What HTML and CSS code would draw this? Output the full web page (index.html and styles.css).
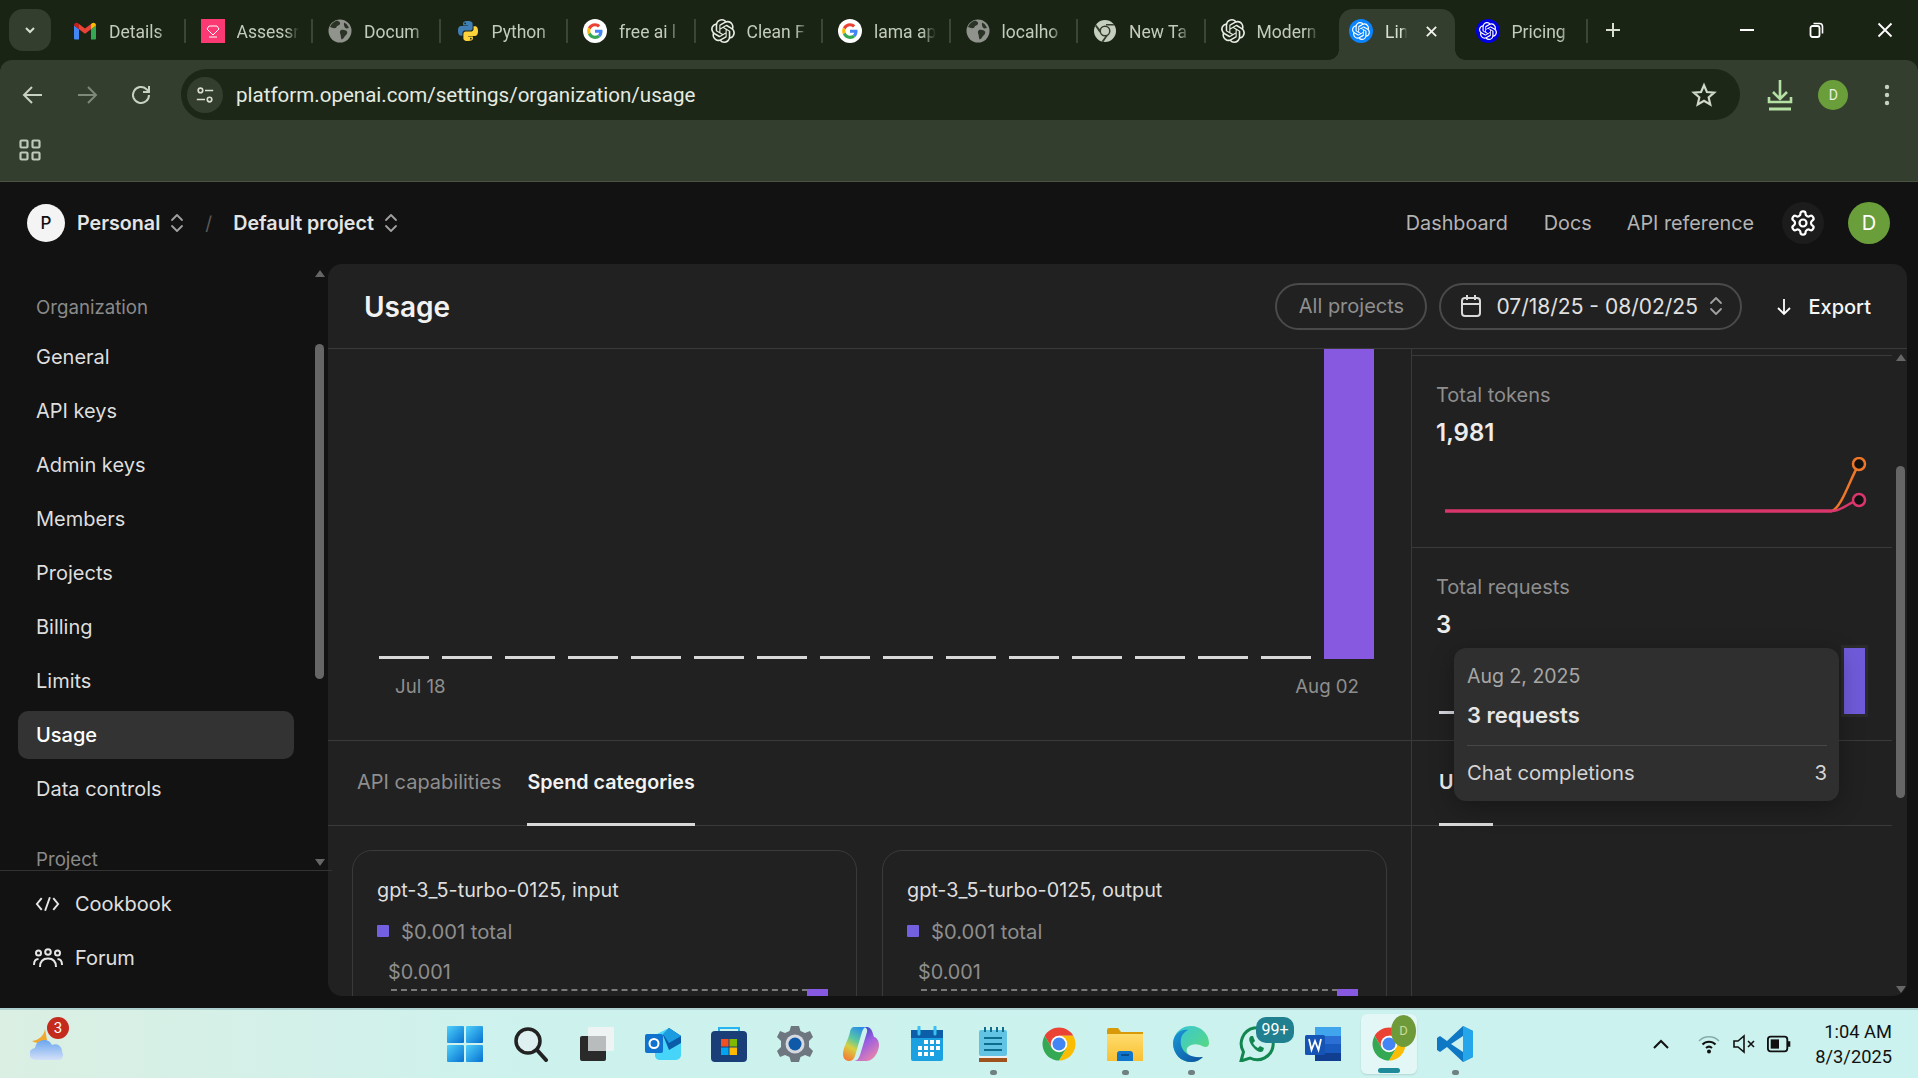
FILE: index.html
```html
<!DOCTYPE html>
<html lang="en">
<head>
<meta charset="utf-8">
<title>Usage</title>
<link rel="stylesheet" href="styles.css">
</head>
<body>
<svg class="sprite" aria-hidden="true">
  <defs>
    <linearGradient id="gWin" x1="0" y1="0" x2="1" y2="1"><stop offset="0" stop-color="#4fd0fb"/><stop offset="1" stop-color="#0670d0"/></linearGradient>
    <linearGradient id="gCop" x1="0.7" y1="0" x2="0.3" y2="1"><stop offset="0" stop-color="#2a8ee8"/><stop offset=".4" stop-color="#5cc8a0"/><stop offset=".65" stop-color="#d8d040"/><stop offset="1" stop-color="#f08038"/></linearGradient>
    <linearGradient id="gCop2" x1="0.2" y1="0" x2="0.8" y2="1"><stop offset="0" stop-color="#1a3fc0"/><stop offset=".45" stop-color="#9a5ee0"/><stop offset="1" stop-color="#f088a8"/></linearGradient>
    <linearGradient id="gEdge" x1="0" y1="0" x2="1" y2="1"><stop offset="0" stop-color="#38c6e0"/><stop offset="1" stop-color="#5fdc6a"/></linearGradient>
    <linearGradient id="gEdge2" x1="0" y1="0" x2="1" y2="1"><stop offset="0" stop-color="#1a9ad8"/><stop offset="1" stop-color="#0c4f9e"/></linearGradient>
    <linearGradient id="gFold" x1="0" y1="0" x2="0" y2="1"><stop offset="0" stop-color="#ffdc6c"/><stop offset="1" stop-color="#f8c034"/></linearGradient>
    <linearGradient id="gCloud" x1="0" y1="0" x2="0" y2="1"><stop offset="0" stop-color="#6aa6ee"/><stop offset="1" stop-color="#d4e0f8"/></linearGradient>
    <symbol id="i-openai" viewBox="0 0 24 24"><path fill="currentColor" d="M22.2819 9.8211a5.9847 5.9847 0 0 0-.5157-4.9108 6.0462 6.0462 0 0 0-6.5098-2.9A6.0651 6.0651 0 0 0 4.9807 4.1818a5.9847 5.9847 0 0 0-3.9977 2.9 6.0462 6.0462 0 0 0 .7427 7.0966 5.98 5.98 0 0 0 .511 4.9107 6.051 6.051 0 0 0 6.5146 2.9001A5.9847 5.9847 0 0 0 13.2599 24a6.0557 6.0557 0 0 0 5.7718-4.2058 5.9894 5.9894 0 0 0 3.9977-2.9001 6.0557 6.0557 0 0 0-.7475-7.0729zm-9.022 12.6081a4.4755 4.4755 0 0 1-2.8764-1.0408l.1419-.0804 4.7783-2.7582a.7948.7948 0 0 0 .3927-.6813v-6.7369l2.02 1.1686a.071.071 0 0 1 .038.052v5.5826a4.504 4.504 0 0 1-4.4945 4.4944zm-9.6607-4.1254a4.4708 4.4708 0 0 1-.5346-3.0137l.142.0852 4.783 2.7582a.7712.7712 0 0 0 .7806 0l5.8428-3.3685v2.3324a.0804.0804 0 0 1-.0332.0615L9.74 19.9502a4.4992 4.4992 0 0 1-6.1408-1.6464zM2.3408 7.8956a4.485 4.485 0 0 1 2.3655-1.9728V11.6a.7664.7664 0 0 0 .3879.6765l5.8144 3.3543-2.0201 1.1685a.0757.0757 0 0 1-.071 0l-4.8303-2.7865A4.504 4.504 0 0 1 2.3408 7.872zm16.5963 3.8558L13.1038 8.364 15.1192 7.2a.0757.0757 0 0 1 .071 0l4.8303 2.7913a4.4944 4.4944 0 0 1-.6765 8.1042v-5.6772a.79.79 0 0 0-.407-.667zm2.0107-3.0231l-.142-.0852-4.7735-2.7818a.7759.7759 0 0 0-.7854 0L9.409 9.2297V6.8974a.0662.0662 0 0 1 .0284-.0615l4.8303-2.7866a4.4992 4.4992 0 0 1 6.6802 4.66zM8.3065 12.863l-2.02-1.1638a.0804.0804 0 0 1-.038-.0567V6.0742a4.4992 4.4992 0 0 1 7.3757-3.4537l-.142.0805L8.704 5.459a.7948.7948 0 0 0-.3927.6813zm1.0976-2.3654l2.602-1.4998 2.6069 1.4998v2.9994l-2.5974 1.4997-2.6067-1.4997Z"/></symbol>
    <symbol id="i-gmail" viewBox="0 0 24 24"><path fill="#4285F4" d="M1 19.5V6.5l5 3.8v10.2H2a1 1 0 0 1-1-1z"/><path fill="#34A853" d="M18 20.5V10.3l5-3.8v13a1 1 0 0 1-1 1z"/><path fill="#EA4335" d="M6 10.3V5l6 4.5L18 5v5.3l-6 4.5z"/><path fill="#C5221F" d="M1 6.5C1 4 3.5 3 5 4.2L6 5v5.3z"/><path fill="#FBBC04" d="M23 6.5c0-2.5-2.5-3.5-4-2.3L18 5v5.3z"/></symbol>
    <symbol id="i-google" viewBox="0 0 64 64"><circle cx="32" cy="32" r="32" fill="#fff"/><g transform="translate(11 11) scale(.875)"><path fill="#EA4335" d="M24 9.5c3.54 0 6.71 1.22 9.21 3.6l6.85-6.85C35.9 2.38 30.47 0 24 0 14.62 0 6.51 5.38 2.56 13.22l7.98 6.19C12.43 13.72 17.74 9.5 24 9.5z"/><path fill="#4285F4" d="M46.98 24.55c0-1.57-.15-3.09-.38-4.55H24v9.02h12.94c-.58 2.96-2.26 5.48-4.78 7.18l7.73 6c4.51-4.18 7.09-10.36 7.09-17.65z"/><path fill="#FBBC05" d="M10.53 28.59c-.48-1.45-.76-2.99-.76-4.59s.27-3.14.76-4.59l-7.98-6.19C.92 16.46 0 20.12 0 24c0 3.88.92 7.54 2.56 10.78l7.97-6.19z"/><path fill="#34A853" d="M24 48c6.48 0 11.93-2.13 16.05-5.81l-7.73-6c-2.15 1.45-4.92 2.3-8.32 2.3-6.26 0-11.57-4.22-13.47-9.91l-7.98 6.19C6.51 42.62 14.62 48 24 48z"/></g></symbol>
    <symbol id="i-python" viewBox="0 0 48 48"><path fill="#3f7fb5" d="M23.6 4c-10 0-9.4 4.3-9.4 4.3v4.5h9.6v1.4H10.4S4 13.5 4 23.6s5.6 9.7 5.6 9.7h3.3v-4.7s-.2-5.6 5.5-5.6h9.5s5.3.1 5.3-5.2V9.1S33.6 4 23.6 4zm-5.3 3a1.7 1.7 0 1 1 0 3.4 1.7 1.7 0 0 1 0-3.4z"/><path fill="#ffd43b" transform="rotate(180 24 24)" d="M23.6 4c-10 0-9.4 4.3-9.4 4.3v4.5h9.6v1.4H10.4S4 13.5 4 23.6s5.6 9.7 5.6 9.7h3.3v-4.7s-.2-5.6 5.5-5.6h9.5s5.3.1 5.3-5.2V9.1S33.6 4 23.6 4zm-5.3 3a1.7 1.7 0 1 1 0 3.4 1.7 1.7 0 0 1 0-3.4z"/></symbol>
    <symbol id="i-globe" viewBox="0 0 24 24"><circle cx="12" cy="12" r="11.5" fill="#8f938c"/><path fill="#2b3327" d="M9 1.5c2.5.8 3.5 2 3 3.5-.8 1.5-3 1.500-3.500 3-.4 1.500-3 1.500-5 .5L2 8c1.200-3 3.800-5.600 7-6.500zM13 11c2-.8 5 0 6 1.500.8 1.500-.5 3.500-2 4.500-.8 1.500-2 3-3.500 3.500-.8-2-.5-3.500-1-5-.8-1.500-1-3.500.5-4.500zM16 3.500l2.500 1.500c1 1.200 2 2.500 2.500 4l-3 .5c-1.500-.8-2.500-3.500-2-6z"/></symbol>
    <symbol id="i-chromegrey" viewBox="0 0 48 48"><circle cx="24" cy="24" r="22" fill="#c6cfbe"/><path fill="#343e2e" d="M15 22l-9-11-2 3 9 13zM26 13h17l-2-3H26zM25 34l-8 11 4 1 8-12z"/><circle cx="24" cy="24" r="11" fill="#343e2e"/><circle cx="24" cy="24" r="8" fill="#c6cfbe"/></symbol>
    <symbol id="i-chrome" viewBox="0 0 48 48"><path fill="#EA4335" d="M4.950 13A22 22 0 0 1 43.050 13H24L14.500 29.500Z"/><path fill="#FBBC04" d="M43.050 13A22 22 0 0 1 24 46L33.500 29.500 24 13Z"/><path fill="#34A853" d="M24 46A22 22 0 0 1 4.950 13L14.500 29.500H33.500Z"/><circle cx="24" cy="24" r="11" fill="#fff"/><circle cx="24" cy="24" r="8.700" fill="#4285F4"/></symbol>
    <symbol id="i-chev" viewBox="0 0 16 24"><path d="M3 9l5-5 5 5M3 15l5 5 5-5" fill="none" stroke="currentColor" stroke-width="1.800" stroke-linecap="round" stroke-linejoin="round"/></symbol>
  </defs>
</svg>

<header class="chrome">
  <div class="tabstrip">
    <button class="tabs-menu"><svg class="ic-14" viewBox="0 0 14 14"><path d="M3 5l4 4 4-4" fill="none" stroke="#d8dfd2" stroke-width="2"/></svg></button>
    <div class="tab"><div class="tab-in"><svg class="fav"><use href="#i-gmail"/></svg><span class="tab-t">Details</span></div></div>
    <div class="tab"><div class="tab-in"><svg class="fav" viewBox="0 0 24 24"><rect width="24" height="24" fill="#fb3a73"/><path d="M8 7h8l2 3-6 6-6-6z" fill="none" stroke="#fff" stroke-width="1"/><path d="M8 18h8" stroke="#fff"/></svg><span class="tab-t">Assessr</span></div></div>
    <div class="tab"><div class="tab-in"><svg class="fav"><use href="#i-globe"/></svg><span class="tab-t">Docum</span></div></div>
    <div class="tab"><div class="tab-in"><svg class="fav"><use href="#i-python"/></svg><span class="tab-t">Python</span></div></div>
    <div class="tab"><div class="tab-in"><svg class="fav"><use href="#i-google"/></svg><span class="tab-t">free ai l</span></div></div>
    <div class="tab"><div class="tab-in"><svg class="fav fav-w"><use href="#i-openai"/></svg><span class="tab-t">Clean F</span></div></div>
    <div class="tab"><div class="tab-in"><svg class="fav"><use href="#i-google"/></svg><span class="tab-t">lama ap</span></div></div>
    <div class="tab"><div class="tab-in"><svg class="fav"><use href="#i-globe"/></svg><span class="tab-t">localho</span></div></div>
    <div class="tab"><div class="tab-in"><svg class="fav"><use href="#i-chromegrey"/></svg><span class="tab-t">New Ta</span></div></div>
    <div class="tab tab-nosep"><div class="tab-in"><svg class="fav fav-w"><use href="#i-openai"/></svg><span class="tab-t">Modern</span></div></div>
    <div class="tab tab-active"><div class="tab-in"><span class="fav-round fav-blue"><svg class="fav-inner"><use href="#i-openai"/></svg></span><span class="tab-t tab-t-short">Lin</span><svg class="tab-x" viewBox="0 0 14 14"><path d="M2 2l10 10M12 2L2 12" stroke="#eef2ea" stroke-width="2"/></svg></div></div>
    <div class="tab"><div class="tab-in"><span class="fav-round fav-navy"><svg class="fav-inner"><use href="#i-openai"/></svg></span><span class="tab-t">Pricing</span></div></div>
    <svg class="newtab" viewBox="0 0 16 16"><path d="M8 1v14M1 8h14" stroke="#d8dfd2" stroke-width="2"/></svg>
    <div class="winctl">
      <svg class="win-b" viewBox="0 0 16 16"><path d="M1 8h14" stroke="#fff" stroke-width="2"/></svg>
      <svg class="win-b" viewBox="0 0 16 16"><rect x="2.500" y="4" width="9" height="11" rx="2" fill="none" stroke="#fff" stroke-width="1.800"/><path d="M5.500 1.500h6a3 3 0 0 1 3 3v7" fill="none" stroke="#fff" stroke-width="1.600"/></svg>
      <svg class="win-b" viewBox="0 0 16 16"><path d="M1.500 1.500l13 13M14.500 1.500l-13 13" stroke="#fff" stroke-width="1.800"/></svg>
    </div>
  </div>
  <div class="toolbar">
    <div class="nav-row">
      <button class="tb-btn"><svg class="ic-24" viewBox="0 0 24 24"><path d="M21 12H4M11 4l-8 8 8 8" fill="none" stroke="#c9d2c2" stroke-width="2"/></svg></button>
      <button class="tb-btn"><svg class="ic-24" viewBox="0 0 24 24"><path d="M3 12h17M13 4l8 8-8 8" fill="none" stroke="#7f8979" stroke-width="2"/></svg></button>
      <button class="tb-btn"><svg class="ic-24" viewBox="0 0 24 24"><path d="M20 12a8 8 0 1 1-2.500-5.800L20 9M20 3v6h-6" fill="none" stroke="#c9d2c2" stroke-width="2"/></svg></button>
      <div class="address">
        <span class="addr-chip"><svg class="ic-22" viewBox="0 0 22 22"><circle cx="6" cy="6" r="2.500" fill="none" stroke="#d8dfd2" stroke-width="1.800"/><path d="M11 6h9M2 16h9" stroke="#d8dfd2" stroke-width="1.800"/><circle cx="16" cy="16" r="2.500" fill="none" stroke="#d8dfd2" stroke-width="1.800"/></svg></span>
        <span class="addr-text">platform.openai.com/settings/organization/usage</span>
        <svg class="star" viewBox="0 0 24 24"><path d="M12 3l2.700 6.200 6.700.6-5.100 4.400 1.500 6.600-5.800-3.500-5.800 3.500 1.500-6.600-5.100-4.400 6.700-.6z" fill="none" stroke="#d0d8c9" stroke-width="2"/></svg>
      </div>
      <button class="tb-btn tb-btn-r"><svg class="ic-dl" viewBox="0 0 26 32"><path d="M13 1v18M6 13l7 7 7-7" fill="none" stroke="#b4e0a4" stroke-width="2.600"/><path d="M2 18v5h22v-5" fill="none" stroke="#b4e0a4" stroke-width="2.600"/><path d="M2 30h22" stroke="#b4e0a4" stroke-width="3"/></svg></button>
      <button class="tb-btn tb-btn-r"><span class="mini-avatar">D</span></button>
      <button class="tb-btn tb-btn-r"><svg class="ic-dots" viewBox="0 0 6 24"><circle cx="3" cy="4" r="2.200" fill="#c9d2c2"/><circle cx="3" cy="12" r="2.200" fill="#c9d2c2"/><circle cx="3" cy="20" r="2.200" fill="#c9d2c2"/></svg></button>
    </div>
    <div class="bookmarks">
      <svg class="ic-apps" viewBox="0 0 22 22"><g fill="none" stroke="#bfc8b8" stroke-width="2.200"><rect x="1.500" y="1.500" width="7" height="7" rx="1"/><rect x="13.500" y="1.500" width="7" height="7" rx="1"/><rect x="1.500" y="13.500" width="7" height="7" rx="1"/><rect x="13.500" y="13.500" width="7" height="7" rx="1"/></g></svg>
    </div>
  </div>
</header>

<div class="app">
  <div class="app-head">
    <span class="org-avatar">P</span>
    <span class="crumb">Personal</span>
    <svg class="chev"><use href="#i-chev"/></svg>
    <span class="crumb-sep">/</span>
    <span class="crumb">Default project</span>
    <svg class="chev"><use href="#i-chev"/></svg>
    <nav class="top-links">
      <a class="top-link">Dashboard</a>
      <a class="top-link">Docs</a>
      <a class="top-link">API reference</a>
      <span class="gear-btn"><svg class="ic-gear" viewBox="0 0 24 24" fill="none" stroke="#fff" stroke-width="1.900"><path d="M12.220 2h-.44a2 2 0 0 0-2 2v.18a2 2 0 0 1-1 1.730l-.43.25a2 2 0 0 1-2 0l-.15-.08a2 2 0 0 0-2.730.73l-.22.38a2 2 0 0 0 .73 2.730l.15.1a2 2 0 0 1 1 1.720v.51a2 2 0 0 1-1 1.740l-.15.09a2 2 0 0 0-.73 2.730l.22.38a2 2 0 0 0 2.730.73l.15-.08a2 2 0 0 1 2 0l.43.25a2 2 0 0 1 1 1.730V20a2 2 0 0 0 2 2h.44a2 2 0 0 0 2-2v-.18a2 2 0 0 1 1-1.730l.43-.25a2 2 0 0 1 2 0l.15.08a2 2 0 0 0 2.730-.73l.22-.39a2 2 0 0 0-.73-2.730l-.15-.08a2 2 0 0 1-1-1.740v-.5a2 2 0 0 1 1-1.740l.15-.09a2 2 0 0 0 .73-2.730l-.22-.38a2 2 0 0 0-2.730-.73l-.15.08a2 2 0 0 1-2 0l-.43-.25a2 2 0 0 1-1-1.730V4a2 2 0 0 0-2-2z"/><circle cx="12" cy="12" r="3"/></svg></span>
      <span class="user-avatar">D</span>
    </nav>
  </div>

  <div class="app-main">
    <aside class="sidebar">
      <div class="side-scroll">
        <div class="side-title">Organization</div>
        <a class="side-item">General</a>
        <a class="side-item">API keys</a>
        <a class="side-item">Admin keys</a>
        <a class="side-item">Members</a>
        <a class="side-item">Projects</a>
        <a class="side-item">Billing</a>
        <a class="side-item">Limits</a>
        <a class="side-item is-active">Usage</a>
        <a class="side-item">Data controls</a>
        <div class="side-title side-title-2">Project</div>
      </div>
      <div class="side-foot">
        <a class="foot-item"><svg class="ic-foot" viewBox="0 0 26 20"><path d="M7 4L2 10l5 6M19 4l5 6-5 6M15.500 3l-5 14" fill="none" stroke="#e6e6e6" stroke-width="2"/></svg>Cookbook</a>
        <a class="foot-item"><svg class="ic-foot ic-foot-forum" viewBox="0 0 30 20" fill="none" stroke="#e6e6e6" stroke-width="2"><circle cx="5.500" cy="5" r="2.500"/><circle cx="15" cy="4" r="2.800"/><circle cx="24.500" cy="5" r="2.500"/><path d="M1 17c0-4 1.500-6 4.500-6M7 19c0-6 3-8.500 8-8.500s8 2.500 8 8.500M29 17c0-4-1.500-6-4.500-6"/></svg>Forum</a>
      </div>
      <div class="vbar vbar-side"><i class="arrow-up"></i><i class="vthumb vthumb-side"></i><i class="arrow-down arrow-side-down"></i></div>
    </aside>

    <main class="panel">
      <div class="panel-head">
        <h1 class="panel-title">Usage</h1>
        <button class="pill pill-dim">All projects</button>
        <button class="pill pill-date">
          <svg class="ic-cal" viewBox="0 0 22 24" fill="none" stroke="#d9d9d9" stroke-width="2"><rect x="2" y="4" width="18" height="18" rx="3"/><path d="M2 10h18M7 1v5M15 1v5"/></svg>
          07/18/25 - 08/02/25
          <svg class="chev chev-date"><use href="#i-chev"/></svg>
        </button>
        <button class="export"><svg class="ic-down" viewBox="0 0 16 18"><path d="M8 1v15M2 10l6 6 6-6" fill="none" stroke="#fff" stroke-width="1.800"/></svg>Export</button>
      </div>
      <div class="panel-body">
        <section class="left-col">
          <div class="bars">
            <i class="dash"></i><i class="dash"></i><i class="dash"></i><i class="dash"></i><i class="dash"></i>
            <i class="dash"></i><i class="dash"></i><i class="dash"></i><i class="dash"></i><i class="dash"></i>
            <i class="dash"></i><i class="dash"></i><i class="dash"></i><i class="dash"></i><i class="dash"></i>
            <i class="bar-big"></i>
          </div>
          <div class="axis"><span>Jul 18</span><span>Aug 02</span></div>
          <div class="tabs tabs-left">
            <span class="tab-link">API capabilities</span>
            <span class="tab-link is-on">Spend categories</span>
          </div>
          <div class="cards">
            <article class="card">
              <div class="card-title">gpt-3_5-turbo-0125, input</div>
              <div class="legend"><i class="sq"></i>$0.001 total</div>
              <div class="y-label">$0.001</div>
              <div class="plot"><i class="plot-bar"></i></div>
            </article>
            <article class="card">
              <div class="card-title">gpt-3_5-turbo-0125, output</div>
              <div class="legend"><i class="sq"></i>$0.001 total</div>
              <div class="y-label">$0.001</div>
              <div class="plot"><i class="plot-bar"></i></div>
            </article>
          </div>
        </section>

        <section class="right-col">
          <div class="stub"></div>
          <div class="stat stat-1">
            <div class="stat-label">Total tokens</div>
            <div class="stat-value">1,981</div>
            <svg class="spark" viewBox="0 0 432 70">
              <path d="M396 54C406 50 414 22 423 7" fill="none" stroke="#ee7628" stroke-width="2.500"/>
              <path d="M396 54C406 54 413 45 423 43" fill="none" stroke="#d9366c" stroke-width="2.500"/>
              <path d="M9 54H396" fill="none" stroke="#d9366c" stroke-width="3.500"/>
              <circle cx="423" cy="7" r="6" fill="#111" stroke="#ee7628" stroke-width="2.500"/>
              <circle cx="423" cy="43" r="6" fill="#111" stroke="#d9366c" stroke-width="2.500"/>
            </svg>
          </div>
          <div class="stat stat-2">
            <div class="stat-label">Total requests</div>
            <div class="stat-value">3</div>
            <div class="mini-bars">
              <i class="mini-dash"></i><i class="mini-dash"></i><i class="mini-dash"></i><i class="mini-dash"></i><i class="mini-dash"></i>
              <i class="mini-dash"></i><i class="mini-dash"></i><i class="mini-dash"></i><i class="mini-dash"></i><i class="mini-dash"></i>
              <i class="mini-dash"></i><i class="mini-dash"></i><i class="mini-dash"></i><i class="mini-dash"></i><i class="mini-dash"></i>
              <i class="mini-bar"></i>
            </div>
          </div>
          <div class="tabs tabs-right"><span class="tab-link is-on tab-u">U</span></div>
          <div class="vbar vbar-right"><i class="arrow-up"></i><i class="vthumb vthumb-right"></i><i class="arrow-down arrow-right-down"></i></div>
          <div class="tooltip">
            <div class="tt-date">Aug 2, 2025</div>
            <div class="tt-main">3 requests</div>
            <div class="tt-row"><span>Chat completions</span><span>3</span></div>
          </div>
        </section>
      </div>
    </main>
  </div>
</div>

<footer class="taskbar">
  <div class="tb-left">
    <span class="weather">
      <svg class="ic-36" viewBox="0 0 36 36"><path d="M15 3c-1 7-6 11-13 12 5 3 11 3 15-1z" fill="#f0a830"/><path d="M6 34a6 6 0 0 1-1-12 9 9 0 0 1 17-3 7 7 0 0 1 10 7 5 5 0 0 1-3 8z" fill="url(#gCloud)"/></svg>
      <b class="wx-badge">3</b>
    </span>
  </div>
  <div class="tb-icons">
    <span class="tbi"><svg class="ic-36" viewBox="0 0 36 36"><g fill="url(#gWin)"><rect width="17" height="17" rx="1"/><rect x="19" width="17" height="17" rx="1"/><rect y="19" width="17" height="17" rx="1"/><rect x="19" y="19" width="17" height="17" rx="1"/></g></svg></span>
    <span class="tbi"><svg class="ic-36" viewBox="0 0 36 36"><circle cx="15" cy="15" r="12" fill="#dff0f0" stroke="#222" stroke-width="3.500"/><path d="M24 24l9 10" stroke="#222" stroke-width="4" stroke-linecap="round"/></svg></span>
    <span class="tbi"><svg class="ic-36" viewBox="0 0 36 36"><rect x="1" y="10" width="26" height="25" rx="2" fill="#2a2a2a"/><rect x="9" y="1" width="26" height="24" rx="1" fill="#f2f4f4" fill-opacity=".9"/><rect x="9" y="10" width="18" height="15" fill="#b9bcbc"/></svg></span>
    <span class="tbi"><svg class="ic-36" viewBox="0 0 36 36"><path d="M10 20V9L24 2l12 8v19a5 5 0 0 1-5 5H14a5 5 0 0 1-4-4z" fill="#46d4f8"/><path d="M18 9l6-7 12 8v7L24 24z" fill="#0a5ca8"/><path d="M18 8l6-6 12 8-12 7z" fill="#1c9ce0"/><rect y="8" width="18" height="19" rx="2" fill="#0f72cf"/><circle cx="9" cy="17.500" r="4.500" fill="none" stroke="#fff" stroke-width="2"/></svg></span>
    <span class="tbi"><svg class="ic-36" viewBox="0 0 36 36"><path d="M8 8V2h20v6" fill="none" stroke="#28b4f0" stroke-width="2"/><rect y="5" width="36" height="31" rx="4" fill="#1a3f78"/><rect x="10" y="13" width="7.500" height="7.500" fill="#f25022"/><rect x="18.500" y="13" width="7.500" height="7.500" fill="#7fba00"/><rect x="10" y="21.500" width="7.500" height="7.500" fill="#00a4ef"/><rect x="18.500" y="21.500" width="7.500" height="7.500" fill="#ffb900"/></svg></span>
    <span class="tbi"><svg class="ic-36" viewBox="0 0 36 36"><path fill="#6e7680" d="M14 0h8l1.500 5 4.500 2 5-2 3 6-4 4v6l4 4-3 6-5-2-4.500 2-1.500 5h-8l-1.500-5L8 29l-5 2-3-6 4-4v-6l-4-4 3-6 5 2 4.500-2z"/><circle cx="18" cy="18" r="9.500" fill="#d6dae0"/><circle cx="18" cy="18" r="6.500" fill="#0e5aa8"/></svg></span>
    <span class="tbi"><svg class="ic-36" viewBox="0 0 36 36"><path d="M20 1h4c3 0 5 3 6 7l1 3c2 0 5 3 5 8 0 6-5 16-12 16H11c3 0 5-3 6-6l7-23c.8-3-1-5-4-5z" fill="url(#gCop2)"/><path d="M11 1h13c-3 0-4 2-5 5l-7 24c-1 3-3 5-6 5-4 0-6-3-6-7 0-7 5-13 7-22 .3-3 2-5 4-5z" fill="url(#gCop)"/></svg></span>
    <span class="tbi"><svg class="ic-36" viewBox="0 0 36 36"><rect x="2" y="4" width="32" height="31" rx="2" fill="#1ba1e2"/><path d="M2 4h32v8H2z" fill="#0c5ea8"/><path d="M10 1v7M26 1v7" stroke="#38c0f0" stroke-width="3" stroke-linecap="round"/><g fill="#fff"><rect x="15" y="14" width="4" height="4"/><rect x="21" y="14" width="4" height="4"/><rect x="27" y="14" width="4" height="4"/><rect x="9" y="20" width="4" height="4"/><rect x="15" y="20" width="4" height="4"/><rect x="21" y="20" width="4" height="4"/><rect x="27" y="20" width="4" height="4"/><rect x="9" y="26" width="4" height="4"/><rect x="15" y="26" width="4" height="4"/><rect x="21" y="26" width="4" height="4"/></g></svg></span>
    <span class="tbi tbi-dot"><svg class="ic-36" viewBox="0 0 36 36"><rect x="4" y="4" width="28" height="26" rx="2" fill="#62c3e4"/><rect x="4" y="30" width="28" height="2" fill="#eee"/><rect x="4" y="32" width="28" height="4" fill="#a0521c"/><path d="M10 1v5M16 1v5M22 1v5M28 1v5" stroke="#0d6d8c" stroke-width="2"/><path d="M9 12h18M9 18h18M9 24h18" stroke="#0d6d8c" stroke-width="2"/></svg></span>
    <span class="tbi"><svg class="ic-36 ic-chrome"><use href="#i-chrome"/></svg></span>
    <span class="tbi tbi-dot"><svg class="ic-36" viewBox="0 0 36 36"><path d="M0 4a2 2 0 0 1 2-2h9l3 4h22v29H0z" fill="#d89a08"/><path d="M0 8h36v27H0z" fill="url(#gFold)"/><path d="M10 35v-7a3 3 0 0 1 3-3h10a3 3 0 0 1 3 3v7z" fill="#0f76cc"/><path d="M14 29h8" stroke="#063f78" stroke-width="1.500"/></svg></span>
    <span class="tbi tbi-dot"><svg class="ic-36" viewBox="0 0 36 36"><path d="M18 0C9 0 1 6 0 17c0 11 8 19 18 19 5 0 9-2 12-5-4 1-9 1-13-1-4-3-4-7-2-9 4-4 11-3 14-1 4 2 7 1 7-3C36 8 28 0 18 0z" fill="url(#gEdge)"/><path d="M0 17C1 7 9 3 15 4 9 7 7 12 8 19c2 8 9 13 22 12-3 3-7 5-12 5C8 36 0 28 0 17z" fill="url(#gEdge2)"/></svg></span>
    <span class="tbi"><svg class="ic-36" viewBox="0 0 36 36"><path d="M2 35l2.500-9A16 16 0 1 1 11 32z" fill="none" stroke="#11864f" stroke-width="3"/><path d="M12 10c-3 2-2 6 2 11s8 6 10 4l1-3-4-2-2 2c-2-1-4-3-5-5l2-2-2-5z" fill="#11864f"/></svg><b class="wa-badge">99+</b></span>
    <span class="tbi"><svg class="ic-36" viewBox="0 0 36 36"><rect x="10" y="1" width="26" height="34" rx="1" fill="#2b6fd4"/><rect x="10" y="1" width="26" height="9" fill="#41a5ee"/><rect x="10" y="18" width="26" height="9" fill="#185abd"/><rect x="10" y="27" width="26" height="8" fill="#103f91"/><rect y="9" width="20" height="20" rx="1.500" fill="#1554b4"/><path d="M4 13l2.500 11 3.500-9 3.500 9L16 13" fill="none" stroke="#fff" stroke-width="1.800"/></svg></span>
    <span class="tbi tbi-active"><svg class="ic-36 ic-chrome"><use href="#i-chrome"/></svg><b class="prof-badge">D</b></span>
    <span class="tbi tbi-dot"><svg class="ic-36" viewBox="0 0 36 36"><path d="M26 0l10 5v26l-10 5-16-15-7 5-3-2V12l3-2 7 5z" fill="#0f78c4"/><path d="M26 0l10 5v26l-10 5z" fill="#25a6ea"/><path d="M26 10L14 18l12 8z" fill="#cdf2ef"/></svg></span>
  </div>
  <div class="tray">
    <svg class="tray-up" viewBox="0 0 18 12"><path d="M2 10l7-7 7 7" fill="none" stroke="#111" stroke-width="2"/></svg>
    <svg class="tray-ic" viewBox="0 0 24 22"><path d="M2 8a14 14 0 0 1 20 0" fill="none" stroke="#8aa" stroke-width="1.600"/><path d="M5.500 11.500a9 9 0 0 1 13 0M9 15a4.500 4.500 0 0 1 6 0" fill="none" stroke="#111" stroke-width="2"/><circle cx="12" cy="18.500" r="2" fill="#111"/></svg>
    <svg class="tray-ic" viewBox="0 0 24 22"><path d="M2 8h4l6-5v16l-6-5H2z" fill="none" stroke="#111" stroke-width="1.600"/><path d="M16 8l6 6M22 8l-6 6" stroke="#111" stroke-width="1.600"/></svg>
    <svg class="tray-ic" viewBox="0 0 26 18"><rect x="1" y="1" width="21" height="16" rx="3" fill="none" stroke="#111" stroke-width="2"/><rect x="4" y="4" width="9" height="10" fill="#111"/><path d="M24 6v6" stroke="#111" stroke-width="2.500"/></svg>
    <div class="clock"><span>1:04 AM</span><span>8/3/2025</span></div>
  </div>
</footer>
</body>
</html>
```

FILE: styles.css
```css
* { box-sizing: border-box; }
html, body { margin: 0; padding: 0; }
body {
  width: 1918px;
  height: 1078px;
  overflow: hidden;
  display: flex;
  flex-direction: column;
  background: #121212;
  font-family: Inter, "Liberation Sans", sans-serif;
  color: #e6e6e6;
}
button { font: inherit; color: inherit; background: none; border: 0; padding: 0; }
i, b { display: block; font-style: normal; }
.sprite { position: absolute; width: 0; height: 0; }

/* Browser chrome */
.chrome { flex: none; background: #1a2415; font-family: Roboto, "Liberation Sans", sans-serif; }
.tabstrip { height: 60px; display: flex; padding-top: 9px; }
.tabs-menu {
  flex: none; width: 42px; height: 42px; margin-left: 9px; margin-right: 7px;
  background: #343e2e; border-radius: 14px;
  display: flex; align-items: center; justify-content: center;
}
.ic-14 { width: 14px; height: 14px; }
.tab { flex: none; width: 127.5px; height: 51px; padding-top: 10px; position: relative; }
.tab-in {
  height: 24px; display: flex; align-items: center; gap: 12px;
  padding-left: 15px; border-right: 2px solid #3c4636;
}
.tab-nosep .tab-in { border-right: 0; }
.tab-t {
  width: 62px; overflow: hidden; white-space: nowrap;
  font-size: 17.5px; line-height: 24px; padding-top: 1px; color: #c3cbbc;
  -webkit-mask-image: linear-gradient(90deg, #000 78%, transparent);
  mask-image: linear-gradient(90deg, #000 78%, transparent);
}
.tab-t-short { width: 22px; color: #d8dfd2; }
.fav { width: 24px; height: 24px; flex: none; display: block; }
.fav-w { color: #e8ece4; }
.fav-round { width: 24px; height: 24px; border-radius: 50%; flex: none; display: flex; align-items: center; justify-content: center; color: #fff; }
.fav-blue { background: #0a84ff; }
.fav-navy { background: #0000e0; }
.fav-inner { width: 18px; height: 18px; }
.tab-active {
  margin: 0 5.5px 0 6px; width: 116px; background: #343e2e;
  border-radius: 14px 14px 0 0;
}
.tab-active .tab-in { border: 0; padding-left: 10px; }
.tab-active::before, .tab-active::after {
  content: ""; position: absolute; bottom: 0; width: 10px; height: 10px;
}
.tab-active::before { left: -10px; background: radial-gradient(circle at 0 0, transparent 9.5px, #343e2e 10px); }
.tab-active::after { right: -10px; background: radial-gradient(circle at 100% 0, transparent 9.5px, #343e2e 10px); }
.tab-x { width: 13px; height: 13px; margin-left: 6px; flex: none; }
.newtab { width: 16px; height: 16px; flex: none; margin: 13px 0 0 17px; }
.winctl { display: flex; margin-left: 118px; gap: 53px; padding-top: 13px; }
.win-b { width: 16px; height: 16px; flex: none; }

.toolbar { height: 122px; background: #343e2e; border-radius: 12px 12px 0 0; border-bottom: 1px solid #4a5344; }
.nav-row { height: 60px; padding-top: 9px; padding-left: 6px; display: flex; }
.tb-btn { flex: none; width: 54px; height: 51px; display: flex; align-items: center; justify-content: center; }
.tb-btn-r { width: 53.5px; }
.ic-24 { width: 24px; height: 24px; }
.ic-22 { width: 20px; height: 20px; }
.address {
  flex: none; width: 1559px; height: 51px; margin: 0 13px;
  background: #1d2718; border-radius: 26px;
  display: flex; align-items: center; padding-left: 6px;
}
.addr-chip { width: 36px; height: 36px; border-radius: 50%; background: #343e2e; display: flex; align-items: center; justify-content: center; flex: none; }
.addr-text { margin-left: 13px; font-size: 20.55px; color: #e6ebe0; white-space: nowrap; }
.star { width: 26px; height: 26px; margin-left: auto; margin-right: 23px; flex: none; }
.ic-dl { width: 26px; height: 32px; }
.mini-avatar { width: 30px; height: 30px; border-radius: 50%; background: #6a9e3a; font-size: 14px; color: #e8f0e0; display: flex; align-items: center; justify-content: center; }
.ic-dots { width: 6px; height: 24px; }
.bookmarks { height: 61px; padding: 19px 0 0 19px; }
.ic-apps { width: 22px; height: 22px; display: block; }

/* App */
.app { flex: 1; min-height: 0; display: flex; flex-direction: column; background: #121212; }
.app-head { flex: none; height: 82px; display: flex; align-items: center; padding: 0 28px 0 27px; font-size: 20px; }
.org-avatar { width: 38px; height: 38px; border-radius: 50%; background: #f4f4f4; color: #111; display: flex; align-items: center; justify-content: center; font-size: 17px; font-weight: 500; margin-right: 12px; }
.crumb { font-weight: 600; font-size: 19.7px; color: #e4e4e4; }
.chev { width: 16px; height: 24px; color: #a0a0a0; margin-left: 9px; flex: none; }
.crumb-sep { color: #5a5a5a; margin: 0 21px 0 20px; font-size: 19px; }
.top-links { margin-left: auto; display: flex; align-items: center; font-size: 19.8px; color: #b4b4b4; }
.top-link { margin-right: 36px; }
.top-link:nth-child(2) { margin-right: 35px; }
.top-link:nth-child(3) { margin-right: 28px; }
.gear-btn { width: 42px; height: 42px; border-radius: 50%; background: #1c1c1c; display: flex; align-items: center; justify-content: center; margin-right: 24px; }
.ic-gear { width: 28px; height: 28px; }
.user-avatar { width: 42px; height: 42px; border-radius: 50%; background: #6a9e3a; color: #fff; display: flex; align-items: center; justify-content: center; font-size: 20px; }

.app-main { flex: 1; min-height: 0; display: flex; padding: 0 11px 12px 0; }
.sidebar { flex: none; width: 328px; position: relative; display: flex; flex-direction: column; }
.side-scroll { height: 607px; overflow: hidden; padding-top: 31px; border-bottom: 1px solid #333; flex: none; margin-right: -4px; }
.side-title { height: 26px; line-height: 26px; padding-left: 36px; margin-bottom: 12px; font-size: 18.67px; color: #8a8a8a; }
.side-title-2 { margin-top: 34px; padding-left: 36px; }
.side-item { display: flex; align-items: center; height: 48px; margin: 3px 0 6px 18px; width: 276px; padding-left: 18px; border-radius: 10px; font-size: 20px; color: #dedede; }
.side-item.is-active { background: #333; color: #fff; font-weight: 500; }
.side-foot { padding-top: 6px; flex: 1; }
.foot-item { display: flex; align-items: center; height: 54px; padding-left: 35px; font-size: 20px; color: #e0e0e0; gap: 15px; }
.ic-foot { width: 25px; height: 20px; flex: none; }
.ic-foot-forum { width: 30px; margin-left: -2px; margin-right: -3px; }

.vbar { position: absolute; width: 9px; }
.vbar-side { left: 315px; top: 6px; height: 600px; }
.arrow-up { width: 0; height: 0; border: 5px solid transparent; border-top: 0; border-bottom: 7px solid #666; margin-left: -.5px; }
.arrow-down { width: 0; height: 0; border: 5px solid transparent; border-bottom: 0; border-top: 7px solid #666; margin-left: -.5px; position: absolute; }
.vthumb { background: #666; border-radius: 5px; width: 9px; position: absolute; left: 0; }
.vthumb-side { top: 74px; height: 335px; }
.arrow-side-down { top: 589px; }

/* Panel */
.panel { flex: 1; min-width: 0; background: #212121; border-radius: 14px; overflow: hidden; display: flex; flex-direction: column; }
.panel-head { flex: none; height: 85px; border-bottom: 1px solid #3a3a3a; display: flex; align-items: center; padding: 0 36px; }
.panel-title { margin: 2px auto 0 0; font-size: 28px; font-weight: 600; color: #f2f2f2; }
.pill { height: 47px; border: 2px solid #4a4a4a; border-radius: 24px; display: flex; align-items: center; font-size: 20px; flex: none; white-space: nowrap; }
.pill-dim { width: 152px; justify-content: center; color: #8e8e8e; margin-right: 12px; }
.pill-date { width: 303px; padding-left: 19px; color: #e0e0e0; font-size: 21px; }
.ic-cal { width: 22px; height: 24px; margin-right: 14px; flex: none; }
.chev-date { margin-left: 10px; }
.export { display: flex; align-items: center; margin: 2px 0 0 34px; font-size: 20px; font-weight: 500; color: #f5f5f5; }
.ic-down { width: 16px; height: 18px; margin-right: 16px; flex: none; }

.panel-body { flex: 1; min-height: 0; display: flex; }
.left-col { flex: none; width: 1084px; border-right: 1px solid #3a3a3a; overflow: hidden; }
.bars { height: 310px; display: flex; align-items: flex-end; gap: 13px; padding-left: 51px; }
.dash { width: 50px; height: 3px; background: #d8d8d8; }
.bar-big { width: 50px; height: 310px; background: #8759e0; }
.axis { height: 82px; border-bottom: 1px solid #3a3a3a; display: flex; justify-content: space-between; padding: 15px 52px 0 67px; font-size: 18.67px; line-height: 26px; color: #8e8e8e; }
.tabs { height: 85px; border-bottom: 1px solid #3a3a3a; display: flex; font-size: 20px; }
.tabs-left { padding-left: 29px; gap: 26px; }
.tabs-right { padding-left: 27px; }
.tab-link { display: flex; align-items: center; height: 85px; padding-bottom: 3px; color: #8e8e8e; }
.tab-link.is-on { color: #f2f2f2; font-weight: 600; padding-bottom: 0; border-bottom: 3px solid #d8d8d8; font-size: 19.7px; }
.tab-u { width: 54px; }
.cards { display: flex; gap: 25px; padding: 24px 24px 0 24px; }
.card { flex: 1; height: 300px; border: 1px solid #3a3a3a; border-radius: 20px; padding: 26px 28px 0 24px; }
.card-title { height: 26px; line-height: 26px; font-size: 19.8px; color: #dedede; white-space: nowrap; }
.legend { display: flex; align-items: center; gap: 12px; height: 26px; margin-top: 15px; font-size: 20.2px; color: #8e8e8e; }
.sq { width: 12px; height: 12px; background: #7360e0; border-radius: 1px; }
.y-label { height: 26px; line-height: 26px; margin: 15px 0 0 11px; font-size: 19.8px; color: #8e8e8e; }
.plot { margin: 4px 0 0 14px; border-top: 2px dashed #7a7a7a; position: relative; display: flex; justify-content: flex-end; }
.plot-bar { width: 21px; height: 24px; background: #8759e0; margin-top: -2px; }

.right-col { flex: 1; min-width: 0; position: relative; padding-right: 15px; }
.stub { height: 7px; border-bottom: 1px solid #3a3a3a; }
.stat { border-bottom: 1px solid #3a3a3a; padding: 26px 0 0 24px; }
.stat-1 { height: 192px; }
.stat-2 { height: 193px; }
.stat-label { height: 26px; line-height: 26px; font-size: 20px; color: #8e8e8e; }
.stat-value { height: 32px; line-height: 32px; margin-top: 9px; font-size: 24px; font-weight: 600; color: #ececec; }
.stat-2 .stat-value { margin-top: 9px; }
.spark { display: block; width: 432px; height: 70px; margin-top: 8px; }
.mini-bars { display: flex; align-items: flex-end; gap: 6px; height: 66px; margin: 7px 0 0 3px; }
.mini-dash { width: 21px; height: 3px; background: #d8d8e0; flex: none; }
.mini-bar { width: 21px; height: 66px; background: #6f5bd9; flex: none; box-shadow: 0 0 0 3px #2a2a2a; }
.vbar-right { left: 484px; top: 5px; height: 636px; }
.vthumb-right { top: 112px; height: 332px; }
.arrow-right-down { top: 632px; }

.tooltip {
  position: absolute; left: 42px; top: 299px; width: 385px; height: 153px;
  background: #2f2f2f; border-radius: 12px; padding: 14px 12px 0 13px;
  box-shadow: 0 6px 24px rgba(0, 0, 0, .3);
}
.tt-date { height: 28px; line-height: 28px; font-size: 19.5px; color: #a6a6a6; }
.tt-main { height: 30px; line-height: 30px; margin-top: 10px; font-size: 22px; font-weight: 600; color: #e6e6e6; }
.tt-row { display: flex; justify-content: space-between; margin-top: 15px; border-top: 1px solid #474747; padding-top: 13px; line-height: 28px; font-size: 20.3px; color: #d4d4d4; }

/* Taskbar */
.taskbar {
  flex: none; height: 70px; display: flex; align-items: center;
  background: linear-gradient(90deg, #dbefe3, #cdf2ee 28%, #cbf2ef);
  border-top: 2px solid #aed0cf;
  font-family: Roboto, "Liberation Sans", sans-serif; color: #111;
}
.tb-left { flex: none; width: 447px; padding-left: 30px; }
.weather { display: block; width: 36px; height: 36px; position: relative; }
.wx-badge { position: absolute; left: 17px; top: -9px; width: 22px; height: 22px; border-radius: 50%; background: #c42b1c; color: #fff; font-size: 15px; font-weight: 400; line-height: 22px; text-align: center; }
.ic-36 { width: 36px; height: 36px; display: block; position: relative; }
.tb-icons { display: flex; gap: 30px; flex: none; }
.tbi { width: 36px; height: 36px; position: relative; display: block; }
.tbi-dot::after { content: ""; position: absolute; left: 15px; top: 44px; width: 7px; height: 5px; border-radius: 3px; background: #6f8080; }
.tbi-active::before { content: ""; position: absolute; left: -10px; top: -12px; width: 56px; height: 60px; background: #e4f7f7; border-radius: 6px; box-shadow: 0 1px 2px rgba(0, 0, 0, .12); }
.tbi-active::after { content: ""; position: absolute; left: 7px; top: 42px; width: 22px; height: 5px; border-radius: 3px; background: #1f8a9a; }
.wa-badge { position: absolute; left: 17px; top: -9px; width: 38px; height: 26px; border-radius: 10px; background: #20808f; color: #fff; font-size: 16px; font-weight: 400; line-height: 26px; text-align: center; }
.prof-badge { position: absolute; left: 20px; top: -11px; width: 25px; height: 32px; border-radius: 50%; background: #6f9a3a; color: #c8dc9c; font-size: 13px; font-weight: 400; line-height: 32px; text-align: center; }
.tray { flex: none; margin-left: auto; display: flex; align-items: center; padding-right: 26px; }
.tray-up { width: 18px; height: 12px; margin-right: 27px; }
.tray-ic { width: 24px; height: 22px; margin-right: 11px; }
.clock { display: flex; flex-direction: column; align-items: flex-end; margin-left: 13px; font-size: 18.3px; line-height: 25px; color: #111; }
```
